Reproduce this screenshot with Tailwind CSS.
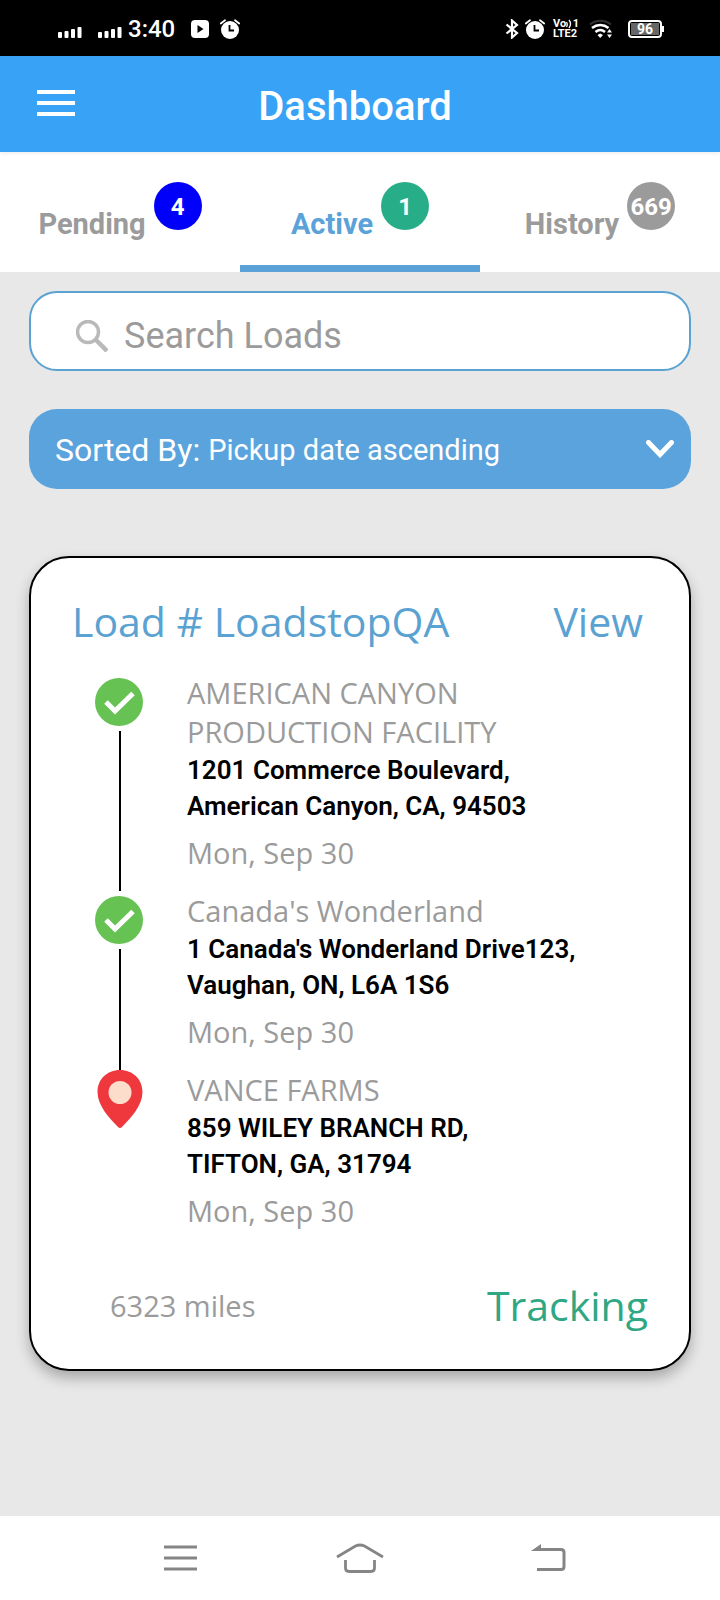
<!DOCTYPE html>
<html lang="en">
<head>
<meta charset="utf-8">
<meta name="viewport" content="width=device-width, initial-scale=1">
<title>Dashboard</title>
<script src="https://cdn.jsdelivr.net/npm/@tailwindcss/browser@4"></script>
</head>
<body class="flex min-h-screen flex-col bg-[#e8e8e8] font-[Roboto,sans-serif]">

<!-- Status bar -->
<div class="flex h-14 items-center justify-between bg-black pt-px pr-14 pl-[58px] text-white">
  <div class="flex items-center">
    <svg class="mt-1.5 h-3 w-6" viewBox="0 0 24 12" fill="currentColor" aria-hidden="true"><rect x="0" y="6" width="4" height="6" rx="1"/><rect x="6.500" y="5" width="4" height="7" rx="1"/><rect x="13" y="3" width="4" height="9" rx="1"/><rect x="19.500" y="1" width="4" height="11" rx="1"/></svg>
    <svg class="mt-1.5 ml-4 h-3 w-6" viewBox="0 0 24 12" fill="currentColor" aria-hidden="true"><rect x="0" y="6" width="4" height="6" rx="1"/><rect x="6.500" y="5" width="4" height="7" rx="1"/><rect x="13" y="3" width="4" height="9" rx="1"/><rect x="19.500" y="1" width="4" height="11" rx="1"/></svg>
    <span class="ml-1.5 text-2xl font-medium">3:40</span>
    <svg class="ml-4 size-[18px]" viewBox="0 0 18 18" aria-hidden="true"><rect width="18" height="18" rx="4" fill="#fff"/><path d="M6.500 5v8l6-4z" fill="#000"/></svg>
    <svg class="ml-[11px] size-5" viewBox="0 0 20 20" aria-hidden="true"><circle cx="10" cy="11" r="9" fill="#fff"/><path d="M.8 4.500 5 1.200M19.200 4.500 15 1.200" stroke="#fff" stroke-width="1.800" stroke-linecap="round"/><path d="M9.500 6v5.500H14" fill="none" stroke="#000" stroke-width="1.800"/></svg>
  </div>
  <div class="flex items-center">
    <svg class="h-5 w-3.5" viewBox="0 0 14 20" fill="none" stroke="#fff" stroke-width="2.200" aria-hidden="true"><path d="M1.500 5.500 12 14l-5 4.500v-17L12 6 1.500 14.500"/></svg>
    <svg class="ml-1.5 size-5" viewBox="0 0 20 20" aria-hidden="true"><circle cx="10" cy="11" r="9" fill="#fff"/><path d="M.8 4.500 5 1.200M19.200 4.500 15 1.200" stroke="#fff" stroke-width="1.800" stroke-linecap="round"/><path d="M9.500 6v5.500H14" fill="none" stroke="#000" stroke-width="1.800"/></svg>
    <span class="ml-2 flex h-5 w-[26px] flex-col justify-between text-[11px] leading-[10px] font-bold whitespace-nowrap">
      <span class="flex items-center justify-between">
        <span>Vo</span>
        <svg class="h-2.5 w-1.5" viewBox="0 0 6 10" fill="none" stroke="#fff" stroke-width="1.300" aria-hidden="true"><path d="M.5 3q1.500 2.500 0 5M3 1q3 4 0 8"/></svg>
        <span>1</span>
      </span>
      <span>LTE2</span>
    </span>
    <svg class="ml-2.5 h-5 w-[23px]" viewBox="0 0 23 20" fill="none" stroke="#fff" stroke-width="2.600" aria-hidden="true"><path d="M1 5.500C7 .5 16 .5 22 5.500" stroke="#333" stroke-width="2"/><path d="M3 9c5-4 11.500-4 16.500 0M6.500 13c3-2.500 6.500-2.500 9.500 0"/><path d="m8.500 16 2.700-1.500 2.800 1.500-2.800 3z" fill="#fff" stroke="none"/><path d="m20.500 10 2.500 3.500h-5zM20.500 19l2.500-3.500h-5z" fill="#fff" stroke="none"/></svg>
    <span class="ml-4 flex h-[18px] w-[34px] items-center rounded-[4px] border-2 border-white p-px"><span class="flex h-full w-full items-center justify-center bg-[#666] text-[14px] leading-none font-bold">96</span></span>
    <span class="h-1.5 w-0.5 bg-white"></span>
  </div>
</div>

<!-- App bar -->
<header class="relative grid h-24 grid-cols-[1fr_auto_1fr] items-center bg-[#37a2f6] pr-[47px] pl-[37px] text-white shadow-[0_2px_3px_rgba(0,0,0,0.06)]">
  <button type="button" aria-label="Open menu" class="-mt-0.5 flex w-[38px] flex-col gap-[7px]">
    <span class="h-1 w-full bg-white"></span><span class="h-1 w-full bg-white"></span><span class="h-1 w-full bg-white"></span>
  </button>
  <h1 class="mt-1.5 text-[40px] leading-12 font-medium">Dashboard</h1>
</header>

<!-- Tabs -->
<nav class="grid h-[120px] grid-cols-3 bg-white text-[29px] leading-8 font-bold text-[#9b9b9b]">
  <a href="#pending" class="flex items-start justify-center gap-2 border-b-[7px] border-transparent pt-[30px]">
    <span class="mt-[26px]">Pending</span>
    <span class="flex size-12 items-center justify-center rounded-full bg-[#0000fa] pt-px text-2xl text-white">4</span>
  </a>
  <a href="#active" aria-current="page" class="flex items-start justify-center gap-2 border-b-[7px] border-[#5aa2d8] pt-[30px] text-[#5aa2d8]">
    <span class="mt-[26px]">Active</span>
    <span class="flex size-12 items-center justify-center rounded-full bg-[#27ae89] pt-px text-2xl text-white">1</span>
  </a>
  <a href="#history" class="flex items-start justify-center gap-2 border-b-[7px] border-transparent pt-[30px]">
    <span class="mt-[26px]">History</span>
    <span class="flex size-12 items-center justify-center rounded-full bg-[#9b9b9b] pt-px text-2xl text-white">669</span>
  </a>
</nav>

<main class="flex flex-1 flex-col px-[29px] pt-[19px]">
  <!-- Search -->
  <label class="flex h-20 items-center rounded-[28px] border-2 border-[#5aa2d2] bg-white pt-2.5 pl-[45px]">
    <svg class="size-8 shrink-0" viewBox="0 0 32 32" fill="none" stroke="#b9b9b9" aria-hidden="true"><circle cx="12" cy="12" r="10.500" stroke-width="3.500"/><path d="m20 20 11 11" stroke-width="4.500"/></svg>
    <input type="search" aria-label="Search loads" placeholder="Search Loads" class="ml-4 min-w-0 flex-1 bg-transparent text-4xl text-[#9b9b9b] outline-none placeholder:text-[#9b9b9b]">
  </label>

  <!-- Sort order -->
  <div class="mt-[38px] flex h-20 items-center rounded-[28px] bg-[#5aa3dc] pr-[17px] pl-[26px] text-white">
    <label for="sort" class="mt-0.5 text-[32px] leading-10">Sorted By:</label>
    <select id="sort" class="mt-0.5 ml-2 min-w-0 flex-1 appearance-none bg-transparent text-[29px] leading-10 outline-none">
      <option>Pickup date ascending</option>
    </select>
    <svg class="h-[18px] w-7" viewBox="0 0 28 18" fill="none" stroke="#fff" stroke-width="5" stroke-linecap="round" aria-hidden="true"><path d="m2.500 2.500 11.500 12 11.500-12"/></svg>
  </div>

  <!-- Load card -->
  <article class="mt-[67px] rounded-[40px] border-2 border-black bg-white pt-9 pb-[37px] font-['Open_Sans',sans-serif] shadow-[0_7px_14px_rgba(0,0,0,0.28)]">
    <div class="flex justify-between pr-[46px] pl-[41px] text-[41px] leading-[54px] text-[#5aa2d2]">
      <h2>Load # LoadstopQA</h2>
      <a href="#view">View</a>
    </div>

    <ol class="mt-[25px] pr-[90px] pl-16 text-[29px] leading-[39px] text-[#9b9b9b]">
      <li class="flex">
        <div class="flex w-[50px] shrink-0 flex-col items-center pt-[5px]">
          <svg class="size-12 shrink-0 self-start" viewBox="0 0 48 48" role="img" aria-label="Completed"><circle cx="24" cy="24" r="24" fill="#67c254"/><path d="m11 24 9 9 18-17.500" fill="none" stroke="#fff" stroke-width="5"/></svg>
          <span class="mt-[5px] w-0.5 flex-1 bg-black"></span>
        </div>
        <div class="ml-[42px] pb-[19px]">
          <p>AMERICAN CANYON PRODUCTION FACILITY</p>
          <address class="mt-px font-[Roboto,sans-serif] text-[26px] leading-9 font-semibold text-black not-italic">1201 Commerce Boulevard,<br>American Canyon, CA, 94503</address>
          <p class="mt-[9px]">Mon, Sep 30</p>
        </div>
      </li>
      <li class="flex">
        <div class="flex w-[50px] shrink-0 flex-col items-center pt-[5px]">
          <svg class="size-12 shrink-0 self-start" viewBox="0 0 48 48" role="img" aria-label="Completed"><circle cx="24" cy="24" r="24" fill="#67c254"/><path d="m11 24 9 9 18-17.500" fill="none" stroke="#fff" stroke-width="5"/></svg>
          <span class="mt-[5px] w-0.5 flex-1 bg-black"></span>
        </div>
        <div class="ml-[42px] pb-[19px]">
          <p>Canada's Wonderland</p>
          <address class="mt-px font-[Roboto,sans-serif] text-[26px] leading-9 font-semibold text-black not-italic">1 Canada's Wonderland Drive123,<br>Vaughan, ON, L6A 1S6</address>
          <p class="mt-[9px]">Mon, Sep 30</p>
        </div>
      </li>
      <li class="flex">
        <div class="flex w-[50px] shrink-0 flex-col items-center">
          <svg class="h-[58px] w-[46px]" viewBox="0 0 46 58" role="img" aria-label="Destination"><path d="M23 0C10 0 .5 9.500.5 22c0 14 12 26 20.500 35q2 2 4 0C33.500 48 45.500 36 45.500 22 45.500 9.500 36 0 23 0z" fill="#ee383e"/><circle cx="23" cy="22.500" r="11.500" fill="#fcdccb"/></svg>
        </div>
        <div class="ml-[42px] pb-[19px]">
          <p>VANCE FARMS</p>
          <address class="mt-px font-[Roboto,sans-serif] text-[26px] leading-9 font-semibold text-black not-italic">859 WILEY BRANCH RD,<br>TIFTON, GA, 31794</address>
          <p class="mt-[9px]">Mon, Sep 30</p>
        </div>
      </li>
    </ol>

    <div class="mt-[29px] flex items-center justify-between pr-[41px] pl-[79px]">
      <p class="text-[29px] leading-[39px] text-[#9b9b9b]">6323 miles</p>
      <a href="#tracking" class="text-[41px] leading-[54px] text-[#2fa783]">Tracking</a>
    </div>
  </article>
</main>

<!-- System navigation -->
<footer class="flex h-[84px] items-center justify-between bg-white px-[154px] text-[#858585]">
  <button type="button" aria-label="Recent apps"><svg class="h-[30px] w-[52px]" viewBox="0 0 52 30" fill="none" stroke="currentColor" stroke-width="3"><path d="M10 4h33M10 15h33M10 26h33"/></svg></button>
  <button type="button" aria-label="Home"><svg class="h-[30px] w-12" viewBox="0 0 48 30" fill="none" stroke="currentColor" stroke-width="2.800"><path d="M1 14 19.500 3Q24 1 28.500 3L47 14M9.500 17v8q0 3.500 3.500 3.500h22q3.500 0 3.500-3.500v-8"/></svg></button>
  <button type="button" aria-label="Back"><svg class="h-[30px] w-[52px]" viewBox="0 0 52 30" fill="none" stroke="currentColor" stroke-width="3"><path d="M22 6.500h25q3 0 3 3v14q0 3-3 3H23"/><path d="M17 8 27 1v7z" fill="currentColor" stroke="none"/></svg></button>
</footer>
</body>
</html>
